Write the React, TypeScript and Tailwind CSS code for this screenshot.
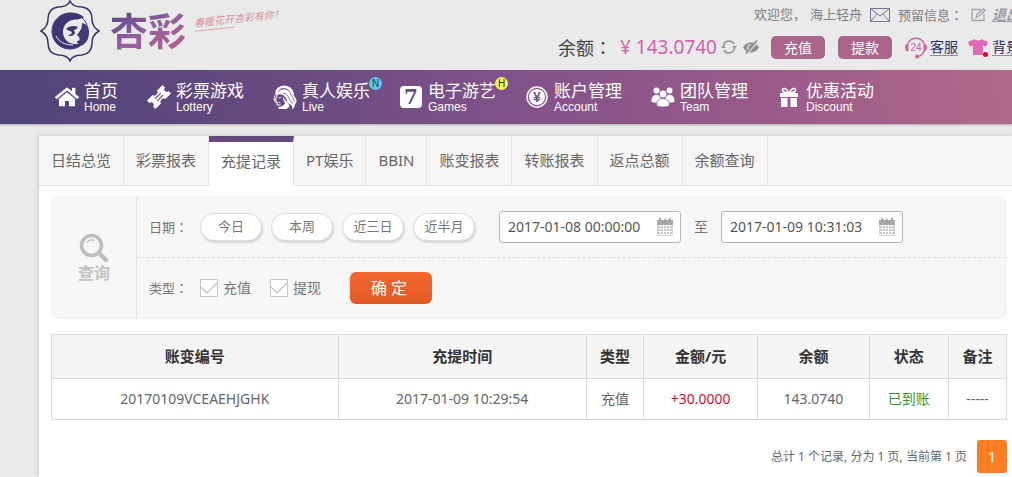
import type { ReactNode } from 'react';
import { FaHome, FaTshirt } from 'react-icons/fa';

/* ---------- icons ---------- */

function LogoMark() {
  return (
    <svg viewBox="0 0 60 62" className="w-[60px] h-[62px]" fill="none">
      <path d="M30 1c2 5 7 6 12 6 7 1 10 5 10 12 0 5 2 9 7 12-5 3-7 7-7 12 0 7-3 11-10 12-5 0-10 1-12 6-2-5-7-6-12-6-7-1-10-5-10-12 0-5-2-9-7-12 5-3 7-7 7-12 0-7 3-11 10-12 5 0 10-1 12-6z" stroke="#3b2f6b" strokeWidth="1.5" />
      <circle cx="30" cy="31" r="18" stroke="#3f3573" strokeWidth="1" />
      <path d="M44 17C34 8 13 13 12 31c0 11 8 18 18 18 6 0 11-3 14-7-8 4-17 2-20-5-3-8 1-15 8-17 4-1 8 0 12-3z" fill="#3f3573" />
      <path d="M26 29c3-3 7-4 12-2-1 2-3 3-4 3l1 3c-1 3-5 4-7 2 2 0 4-1 4-3-2-1-5-2-6-3z" fill="#3f3573" />
      <path d="M42 23c5 1 7 5 7 9 0 6-2 10-6 13-3 1-6-1-6-4 3 0 3-2 2-4l-2-2c3-4 5-6 5-12z" fill="#463978" />
      <path d="M16 36c3 6 9 9 17 9" stroke="#eaeaeb" strokeWidth="1" />
    </svg>
  );
}

function RefreshIcon() {
  return (
    <svg viewBox="0 0 16 16" className="size-4" fill="none" stroke="#999" strokeWidth="1.8">
      <path d="M2.500 7a5.700 5.700 0 0 1 10.500-2.200M13.500 9A5.700 5.700 0 0 1 3 11.200" />
      <path d="M11 7h5l-2.500 3zM0 9h5L2.500 6z" fill="#999" stroke="none" />
    </svg>
  );
}

function HiddenIcon() {
  return (
    <svg viewBox="0 0 16 16" className="size-4" fill="none">
      <path d="M0 8.500C2 5 5 3.500 8 3.500s6 1.500 8 5c-2 3.500-5 5-8 5s-6-1.500-8-5z" fill="#8f8f8f" />
      <path d="M5 11c-1-2 0-5 3-5.500" stroke="#eaeaea" strokeWidth="1.2" />
      <path d="M4 15L15 2" stroke="#eaeaea" strokeWidth="1.5" />
      <path d="M3 14.500L14 1.500" stroke="#8f8f8f" strokeWidth="1.8" />
    </svg>
  );
}

function MailIcon() {
  return (
    <svg viewBox="0 0 20 14" className="w-5 h-3.5" fill="none" stroke="#77749c" strokeWidth="1">
      <path d="M.5.500h19v13H.5zM.5.500L10 8l9.500-7.500M.5 13.500L7 6M19.500 13.500L13 6" />
    </svg>
  );
}

function EditIcon() {
  return (
    <svg viewBox="0 0 15 14" className="w-[15px] h-3.5" fill="none" stroke="#a2a2ae" strokeWidth="1.3">
      <path d="M10 1.500H1v11h12V6" />
      <path d="M5 9.500l1-3 6.500-5.500 1.500 1.500L8 8.500z" />
    </svg>
  );
}

function ServiceIcon() {
  return (
    <svg viewBox="0 0 22 23" className="w-[22px] h-[23px]" fill="none">
      <path d="M3 7.500a8.700 8.700 0 0 1 16 0M19 15c-1 3-3 5-6 5.500" stroke="#d461a6" strokeWidth="1.6" />
      <path d="M3.500 7.500v8C1.500 15.500 0 14 0 11.500s1.500-4 3.500-4zM18.500 7.500v8c2 0 3.500-1.500 3.500-4s-1.500-4-3.500-4z" fill="#d461a6" />
      <circle cx="12" cy="20.500" r="2" fill="#d461a6" />
      <text x="11" y="15" textAnchor="middle" fontSize="10" fontFamily="Liberation Sans, sans-serif" fill="#d461a6">24</text>
    </svg>
  );
}

function TicketIcon() {
  return (
    <svg viewBox="0 0 24 24" className="size-6">
      <g transform="rotate(-45 12 12)">
        <path d="M1 6h8a3 2.500 0 0 0 6 0h8v3.500a2.500 2.500 0 0 0 0 5V18h-8a3 2.500 0 0 0-6 0H1v-3.500a2.500 2.500 0 0 0 0-5z" fill="#fff" />
        <path d="M8 10.500h8M8 13.500h8" stroke="#6b4e85" strokeWidth="1.2" />
      </g>
    </svg>
  );
}

function LiveIcon() {
  return (
    <svg viewBox="0 0 26 28" className="w-[26px] h-7" fill="none">
      <path d="M3 12C1 6 6 2 12 1.500c6 0 10 4 10.500 9 0 4 3 4 3 8 0 2-2 3-2 5 0 1-1 3-3 4 1-3 0-5-3-6-3-2-2-5-4-7-2-3-6-4-8-3z" fill="#fff" />
      <path d="M5 9c3-4 8-5 12-2M7 6c5-3 10 0 12 4 1 4 4 5 4 9M11 10c7 0 5 8 11 11" stroke="#76508a" strokeWidth="0.9" />
      <path d="M4.500 12c-1 2 0 3-2.500 5l1.500.5-.5 2 1.500.5v2.500l4 .5" stroke="#fff" strokeWidth="1.1" />
      <path d="M6 15l3-.5M6 20h2M2 12c-1 3-1 5 0 7" stroke="#fff" />
      <path d="M11 14c-1 3 2 5 2 7-2 3-5 4-8 4l2 2h8l3-3c-1-4-5-6-7-10z" fill="#fff" />
    </svg>
  );
}

function SevenIcon() {
  return (
    <svg viewBox="0 0 22 22" className="size-[22px]">
      <rect width="22" height="22" rx="4" fill="#fff" />
      <text x="11" y="18" textAnchor="middle" fontSize="20" fontWeight="bold" fontFamily="DejaVu Serif, serif" fill="#6b4c7e">7</text>
    </svg>
  );
}

function YuanIcon() {
  return (
    <svg viewBox="0 0 22 22" className="size-[22px]" fill="none">
      <circle cx="11" cy="11" r="10" stroke="#fff" strokeWidth="1.5" />
      <circle cx="11" cy="11" r="8" fill="#fff" />
      <text x="11" y="16" textAnchor="middle" fontSize="14" fontWeight="bold" fontFamily="Liberation Sans, sans-serif" fill="#7a5085">¥</text>
    </svg>
  );
}

function TeamIcon() {
  return (
    <svg viewBox="0 0 24 20" className="w-6 h-5">
      <g fill="#fff" stroke="#875389" strokeWidth="0.8">
        <circle cx="5.500" cy="3.500" r="3.500" />
        <circle cx="18.500" cy="3.500" r="3.500" />
        <path d="M0 15c0-5 2-7.500 5.500-7.500S11 10 11 15c-3 1.500-8 1.500-11 0zM13 15c0-5 2-7.500 5.500-7.500S24 10 24 15c-3 1.500-8 1.500-11 0z" />
        <circle cx="12" cy="7" r="4" />
        <path d="M5.500 18.500c0-5 2.500-7 6.500-7s6.500 2 6.500 7c-3 2-10 2-13 0z" />
      </g>
    </svg>
  );
}

function GiftIcon() {
  return (
    <svg viewBox="0 0 20 20" className="size-5">
      <path d="M1 6h18v4H1zM2 11h6.500v9H2zM11.500 11H18v9h-6.500z" fill="#fff" />
      <path d="M9.500 6C8 1 3 0 3.500 3.500 4 6 8 5.500 9.500 6zM10.500 6C12 1 17 0 16.500 3.500 16 6 12 5.500 10.500 6z" fill="none" stroke="#fff" strokeWidth="1.5" />
    </svg>
  );
}

function CalendarIcon() {
  return (
    <svg viewBox="0 0 16 18" className="w-4 h-[18px]">
      <path d="M0 2h2V0h2v2h3V1h2v1h3V0h2v2h2v5H0z" fill="#a5a5a5" />
      <path d="M1 9h14M1 12h14M1 15h14" stroke="#c4c4c4" strokeWidth="2" strokeDasharray="2 1" />
      <path d="M.5 7v10.500h15V7" fill="none" stroke="#d5d5d5" />
    </svg>
  );
}

function SearchIcon() {
  return (
    <svg viewBox="0 0 30 30" className="size-[30px]" fill="none" stroke="#bdbdbd">
      <circle cx="12.500" cy="12.500" r="10" strokeWidth="3.5" />
      <path d="M20 20l2 2" strokeWidth="3" />
      <path d="M22 22l5 5" strokeWidth="4.5" strokeLinecap="round" />
      <path d="M7.500 10c1-3 5-4 8-2.500" strokeWidth="1.2" />
    </svg>
  );
}

/* ---------- data ---------- */

type NavItem = { zh: string; en: string; icon: ReactNode; badge?: string; badgeClass?: string };

const navItems: NavItem[] = [
  { zh: '首页', en: 'Home', icon: <FaHome className="size-6" /> },
  { zh: '彩票游戏', en: 'Lottery', icon: <TicketIcon /> },
  { zh: '真人娱乐', en: 'Live', icon: <LiveIcon />, badge: 'N', badgeClass: 'bg-[#5cc8ee]' },
  { zh: '电子游艺', en: 'Games', icon: <SevenIcon />, badge: 'H', badgeClass: 'bg-[#f6f25a]' },
  { zh: '账户管理', en: 'Account', icon: <YuanIcon /> },
  { zh: '团队管理', en: 'Team', icon: <TeamIcon /> },
  { zh: '优惠活动', en: 'Discount', icon: <GiftIcon /> },
];

const tabs = ['日结总览', '彩票报表', '充提记录', 'PT娱乐', 'BBIN', '账变报表', '转账报表', '返点总额', '余额查询'];
const activeTab = '充提记录';

const ranges = ['今日', '本周', '近三日', '近半月'];

const columns = [
  { title: '账变编号', width: 'w-[30%]' },
  { title: '充提时间', width: 'w-[26%]' },
  { title: '类型', width: 'w-[57px]' },
  { title: '金额/元', width: 'w-[114px]' },
  { title: '余额', width: 'w-[111px]' },
  { title: '状态', width: 'w-[79px]' },
  { title: '备注', width: 'w-[58px]' },
];

const rows = [
  { id: '20170109VCEAEHJGHK', time: '2017-01-09 10:29:54', type: '充值', amount: '+30.0000', balance: '143.0740', status: '已到账', note: '-----' },
];

/* ---------- parts ---------- */

// full-width colon centred in its cell
function Colon() {
  return <span className="font-['Noto_Sans_CJK_TC',sans-serif]">：</span>;
}

function Header() {
  return (
    <header className="flex justify-between h-[70px] pl-10 whitespace-nowrap">
      <a href="#" className="flex shrink-0">
        <LogoMark />
        <span className="ml-2.5 mt-2 h-11 text-[38px] leading-[44px] font-bold bg-gradient-to-br from-[#51417f] via-[#94609f] to-[#bb5b88] bg-clip-text text-transparent">
          杏彩
        </span>
        <span className="ml-2 mt-2.5 h-4 text-[10px] leading-4 italic -rotate-6 text-[#d99297]">
          春暖花开杏彩有你！
          <span className="block w-10 border-b border-[#dfaaae]" />
        </span>
      </a>

      <div className="flex flex-col items-end -mr-2 pt-1">
        <div className="flex items-center h-[22px] text-[13px] text-[#7d7d85]">
          <span>欢迎您，</span>
          <span className="ml-1">海上轻舟</span>
          <a href="#" aria-label="站内信" className="ml-2"><MailIcon /></a>
          <span className="ml-2">预留信息<Colon /></span>
          <button aria-label="编辑" className="ml-2"><EditIcon /></button>
          <a href="#" className="ml-1.5 text-sm font-bold italic underline text-[#9a9aa4]">退出</a>
        </div>
        <div className="flex items-center h-8 mt-1.5 pb-0.5">
          <span className="text-lg leading-6 text-[#444]">余额<Colon /></span>
          <span className="ml-2 text-[19px] leading-6 text-[#d660ac]">¥ 143.0740</span>
          <button aria-label="刷新" className="ml-1"><RefreshIcon /></button>
          <button aria-label="隐藏余额" className="ml-1.5"><HiddenIcon /></button>
          <button className="ml-3 w-[54px] h-[23px] rounded-[5px] bg-[#a9668c] text-sm leading-[23px] text-white">充值</button>
          <button className="ml-[13px] w-[54px] h-[23px] rounded-[5px] bg-[#a9668c] text-sm leading-[23px] text-white">提款</button>
          <a href="#" className="flex items-center gap-[3px] ml-[13px] text-sm text-[#2c2c64]">
            <ServiceIcon />
            <span className="border-b border-[#8a8aac] leading-4">客服</span>
          </a>
          <a href="#" className="flex items-center gap-1 ml-2.5 text-sm text-[#2c2c64]">
            <span className="relative">
              <FaTshirt className="size-5 text-[#e368b8]" />
              <span className="absolute right-0 bottom-0 size-[5px] rounded-full bg-[#e60012]" />
            </span>
            <span className="border-b border-[#8a8aac] leading-4">背景</span>
          </a>
        </div>
      </div>
    </header>
  );
}

function Nav() {
  return (
    <nav className="relative flex items-center gap-[29px] h-[54px] pl-[55px] whitespace-nowrap text-white bg-[linear-gradient(80deg,#4f4378_0%,#684a80_28%,#81528a_50%,#9c5b8a_78%,#b06a8a_100%)] shadow-[0_1px_2px_#aaa]">
      {navItems.map((item) => (
        <a key={item.en} href="#" className="flex items-center gap-[5px]">
          <span className="flex justify-center w-6 shrink-0">{item.icon}</span>
          <span className="relative flex flex-col">
            <span className="text-[17px] leading-5">{item.zh}</span>
            <span className="font-['Liberation_Sans',Arial,sans-serif] text-xs leading-3">{item.en}</span>
            {item.badge && (
              <span className={`absolute -top-1 left-[67px] size-[13px] rounded-full text-center font-['Liberation_Sans',Arial,sans-serif] text-[10px] leading-[13px] text-[#333] ${item.badgeClass}`}>
                {item.badge}
              </span>
            )}
          </span>
        </a>
      ))}
    </nav>
  );
}

function Tabs() {
  return (
    <div className="flex h-[50px] bg-[#f7f6f5] whitespace-nowrap text-[15px] text-[#666]">
      {tabs.map((tab) => (
        <button
          key={tab}
          className={
            tab === activeTab
              ? 'px-3 bg-white border-t-[6px] border-r border-t-[#66487d] border-r-[#e2e2e2] pb-1.5'
              : 'px-3 border-r border-b border-[#e2e2e2]'
          }
        >
          {tab}
        </button>
      ))}
      <div className="flex-1 border-b border-[#e2e2e2]" />
    </div>
  );
}

function DateField({ label, value }: { label: string; value: string }) {
  return (
    <div className="flex items-center w-[182px] h-8 pl-2 pr-[7px] bg-white border border-[#b5b5b5] rounded-[3px]">
      <input aria-label={label} defaultValue={value} className="flex-1 min-w-0 text-sm text-[#555] outline-none" />
      <button type="button" aria-label="选择日期"><CalendarIcon /></button>
    </div>
  );
}

function TypeCheckbox({ label }: { label: string }) {
  return (
    <label className="flex items-center gap-[5px]">
      <span className="relative size-[18px]">
        <input type="checkbox" defaultChecked className="peer block appearance-none size-[18px] bg-white border border-[#c6c6c6]" />
        <svg viewBox="0 0 18 18" className="absolute inset-0 hidden peer-checked:block pointer-events-none" fill="none" stroke="#bdbdbd" strokeWidth="1.2">
          <path d="M1 8l6 6L17 4" />
        </svg>
      </span>
      <span className="text-sm">{label}</span>
    </label>
  );
}

function Filters() {
  return (
    <form className="flex bg-[#f7f7f7] border border-[#f3f3f3] rounded-lg text-[#777] whitespace-nowrap" onSubmit={(e) => e.preventDefault()}>
      <div className="flex flex-col items-center justify-center w-[85px] border-r border-[#e3e3e3] text-base leading-5 font-bold text-[#c2c2c2]">
        <SearchIcon />
        <span>查询</span>
      </div>
      <div className="flex-1">
        <div className="flex items-center h-[61px] pl-3 border-b border-dashed border-[#d9dde0]">
          <span className="w-[51px] text-[13px]">日期<Colon /></span>
          <div className="flex gap-[9px]">
            {ranges.map((r) => (
              <button key={r} type="button" className="w-[62px] h-7 rounded-full bg-white border border-[#dcdcdc] shadow-[1px_2px_2px_#d5d5d5] text-[13px]">
                {r}
              </button>
            ))}
          </div>
          <div className="flex items-center ml-6">
            <DateField label="开始时间" value="2017-01-08 00:00:00" />
            <span className="w-10 text-center text-sm">至</span>
            <DateField label="结束时间" value="2017-01-09 10:31:03" />
          </div>
        </div>
        <div className="flex items-center h-[60px] pl-3">
          <span className="w-[51px] text-[13px]">类型<Colon /></span>
          <div className="flex gap-[19px]">
            <TypeCheckbox label="充值" />
            <TypeCheckbox label="提现" />
          </div>
          <button type="submit" className="ml-[29px] w-[82px] h-8 pr-1 rounded-md bg-gradient-to-b from-[#f4672f] to-[#e05a25] text-base text-white">
            确 定
          </button>
        </div>
      </div>
    </form>
  );
}

function Records() {
  return (
    <table className="w-full mt-[15px] table-fixed border-collapse text-center text-sm text-[#666]">
      <thead>
        <tr className="h-11 bg-[#f5f5f5] text-[15px] text-[#333]">
          {columns.map((c) => (
            <th key={c.title} className={`border border-[#d9d9d9] font-bold ${c.width}`}>{c.title}</th>
          ))}
        </tr>
      </thead>
      <tbody>
        {rows.map((r) => (
          <tr key={r.id} className="h-[41px]">
            <td className="border border-[#d9d9d9]">{r.id}</td>
            <td className="border border-[#d9d9d9]">{r.time}</td>
            <td className="border border-[#d9d9d9]">{r.type}</td>
            <td className="border border-[#d9d9d9] text-[#c8102e]">{r.amount}</td>
            <td className="border border-[#d9d9d9]">{r.balance}</td>
            <td className="border border-[#d9d9d9] text-[#2f9a2f]">{r.status}</td>
            <td className="border border-[#d9d9d9]">{r.note}</td>
          </tr>
        ))}
      </tbody>
    </table>
  );
}

export default function App() {
  return (
    <div className="flex flex-col min-h-screen overflow-hidden bg-[#eaeaeb] font-['Noto_Sans','Noto_Sans_CJK_SC',sans-serif]">
      <Header />
      <Nav />
      <main className="flex-1 mt-3 ml-[39px] bg-white shadow-[0_0_4px_#bbb]">
        <Tabs />
        <div className="pt-2.5 pl-3 pr-[5px]">
          <Filters />
          <Records />
          <div className="flex items-center justify-end gap-2.5 mt-5 text-xs text-[#666]">
            <span>总计 1 个记录, 分为 1 页, 当前第 1 页</span>
            <button className="w-[30px] h-[33px] rounded-[3px] bg-[#fb7f22] text-sm text-white">1</button>
          </div>
        </div>
      </main>
    </div>
  );
}
